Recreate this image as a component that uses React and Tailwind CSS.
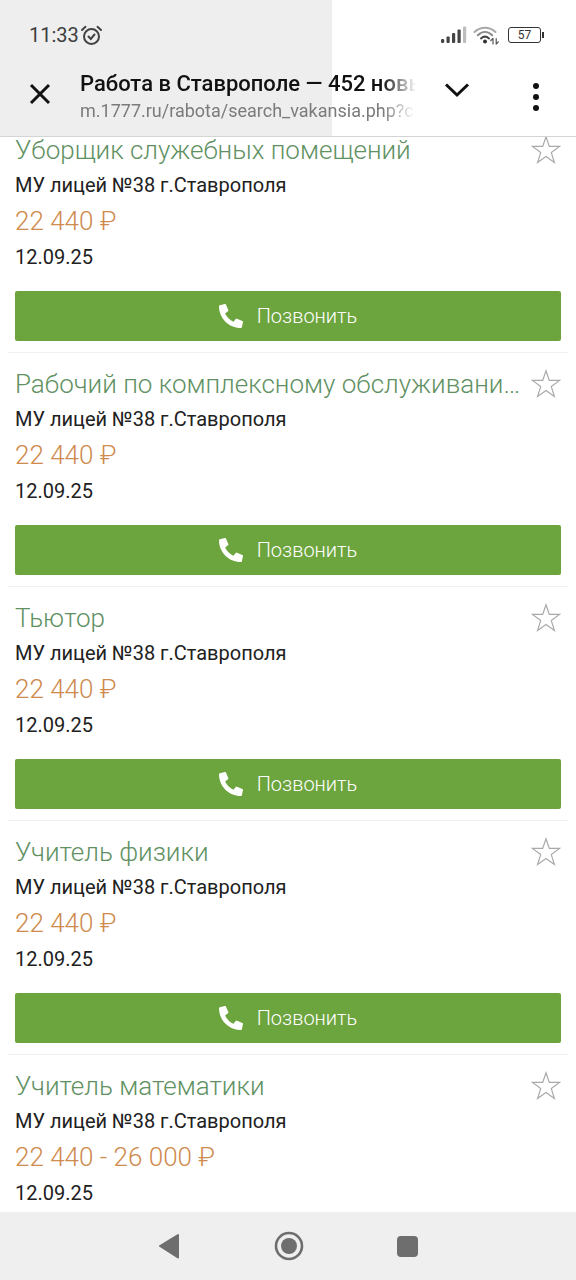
import React from "react";
import { FaPhoneAlt } from "react-icons/fa";

const jobs = [
  { title: "Уборщик служебных помещений", price: "22 440 ₽" },
  { title: "Рабочий по комплексному обслуживани…", price: "22 440 ₽" },
  { title: "Тьютор", price: "22 440 ₽" },
  { title: "Учитель физики", price: "22 440 ₽" },
  { title: "Учитель математики", price: "22 440 - 26 000 ₽" },
];

function Star() {
  return (
    <svg width="30" height="30" viewBox="0 0 30 30" fill="none" stroke="#a9a9a9" strokeWidth="1.2" strokeLinejoin="miter">
      <path d="M15 1.8 18.3 11.4 28.6 11.4 20.3 17.6 23.4 27.6 15 21.6 6.6 27.6 9.7 17.6 1.4 11.4 11.7 11.4Z" />
    </svg>
  );
}

function Card({ title, price }) {
  return (
    <div className="mx-2 h-[234px] shrink-0 border-b border-[#f1f1f1] px-[7px] pt-[14px]">
      <div className="flex h-[34px] items-center justify-between">
        <div className="min-w-0 truncate text-[26px] leading-[34px] font-light text-[#5f9163]">{title}</div>
        <div className="ml-2 shrink-0 pr-[-1px]"><Star /></div>
      </div>
      <div className="mt-[2px] text-[20px] leading-[32px] text-[#212121]">МУ лицей №38 г.Ставрополя</div>
      <div className="mt-[3px] text-[26px] leading-[34px] font-light text-[#cf8a4e]">{price}</div>
      <div className="mt-[2px] text-[20px] leading-[34px] text-[#212121]">12.09.25</div>
      <div className="mt-[17px] flex h-[50px] items-center justify-center gap-[14px] rounded-[2px] bg-[#6ca43e] text-[20px] text-white">
        <FaPhoneAlt className="h-[24px] w-[24px]" />
        <span className="font-light">Позвонить</span>
      </div>
    </div>
  );
}

function Alarm() {
  return (
    <svg width="23" height="23" viewBox="0 0 23 23" fill="none" stroke="#424242" strokeWidth="2" strokeLinecap="round">
      <circle cx="11.5" cy="12.5" r="7.5" />
      <path d="M8.5 12.5 10.8 15 14.5 10.5" />
      <path d="M2 6 5.5 2.8M21 6 17.5 2.8" />
    </svg>
  );
}

function Signal() {
  return (
    <svg width="26" height="18" viewBox="0 0 26 18">
      <rect x="0" y="13" width="3.2" height="4" rx="1.2" fill="#444" />
      <rect x="5.5" y="10.5" width="3.2" height="6.5" rx="1" fill="#444" />
      <rect x="11" y="7" width="3.2" height="10" rx="1" fill="#444" />
      <rect x="16.5" y="3.5" width="3.2" height="13.5" rx="1" fill="#444" />
      <rect x="22" y="0.5" width="3.2" height="16.5" rx="1" fill="#bdbdbd" />
    </svg>
  );
}

function Wifi() {
  return (
    <svg width="26" height="20" viewBox="0 0 26 20" fill="none" strokeLinecap="round">
      <path d="M1.5 7C7.5 1.2 16.5 1.2 22.5 7" stroke="#a8a8a8" strokeWidth="2" />
      <path d="M4.8 10.3C9.2 6 14.8 6 19.2 10.3" stroke="#8a8a8a" strokeWidth="2" />
      <path d="M8 13.4C10.5 11.2 13.5 11.2 16 13.4" stroke="#444" strokeWidth="2" />
      <circle cx="12" cy="16.6" r="2" fill="#333" />
      <path d="M20 13.5V19M17.8 15.5 20 13.5M23.2 13.5V19M23.2 19 25.2 17" stroke="#555" strokeWidth="1.2" />
    </svg>
  );
}

export default function App() {
  return (
    <div className="flex h-[1280px] w-[576px] flex-col overflow-hidden bg-white font-['Roboto',sans-serif]">
      <header className="relative z-10 h-[137px] shrink-0 border-b border-[#d4d4d4] bg-white">
        <div className="absolute inset-y-0 left-0 w-[332px] bg-[#eeeeee]" />
        <div className="relative flex h-[70px] items-start justify-between pt-[22px] pl-[29px] pr-[32px]">
          <div className="flex items-center gap-[1px] text-[20px] leading-[27px] text-[#3d3d3d]">
            <span>11:33</span>
            <Alarm />
          </div>
          <div className="flex items-center gap-[6px] pt-[3px]">
            <Signal />
            <Wifi />
            <div className="ml-[3px] flex items-center">
              <div className="flex h-[16px] w-[33px] items-center justify-center rounded-[3px] border border-[#333] text-[12px] leading-none text-[#333]">57</div>
              <div className="ml-[1px] h-[6px] w-[2px] bg-[#333]" />
            </div>
          </div>
        </div>
        <div className="relative flex h-[66px] items-start">
          <div className="flex w-[80px] justify-center pt-[12px]">
            <svg width="24" height="24" viewBox="0 0 24 24" fill="none" stroke="#111" strokeWidth="3">
              <path d="M3 3 21 21M21 3 3 21" />
            </svg>
          </div>
          <div className="w-[336px] overflow-hidden whitespace-nowrap [mask-image:linear-gradient(to_right,black_90%,transparent)]">
            <div className="text-[22px] leading-[27px] font-medium text-[#111]">Работа в Ставрополе — 452 новых вакансии</div>
            <div className="text-[18px] leading-[27px] text-[#7b7b7b]">m.1777.ru/rabota/search_vakansia.php?city=stavropol</div>
          </div>
          <div className="flex w-[82px] justify-center pt-[12px]">
            <svg width="26" height="16" viewBox="0 0 26 16" fill="none" stroke="#111" strokeWidth="3">
              <path d="M2 2.5 13 13 24 2.5" />
            </svg>
          </div>
          <div className="flex flex-1 flex-col items-center gap-[5px] pt-[13px] pr-[2px]">
            <span className="h-[6px] w-[6px] rounded-full bg-[#111]" />
            <span className="h-[6px] w-[6px] rounded-full bg-[#111]" />
            <span className="h-[6px] w-[6px] rounded-full bg-[#111]" />
          </div>
        </div>
      </header>
      <main className="min-h-0 flex-1 overflow-hidden">
        <div className="mt-[-18px] flex flex-col">
          {jobs.map((j) => (
            <Card key={j.title} title={j.title} price={j.price} />
          ))}
        </div>
      </main>
      <nav className="flex h-[68px] shrink-0 items-center justify-center bg-[#efefef] pt-[-1px]">
        <div className="flex w-[260px] items-center justify-between">
          <svg width="22" height="26" viewBox="0 0 22 26" fill="#6e6e6e">
            <path d="M20 2 2 13 20 24.5Z" stroke="#6e6e6e" strokeWidth="2" strokeLinejoin="round" />
          </svg>
          <svg width="30" height="30" viewBox="0 0 30 30">
            <circle cx="15" cy="15" r="13" fill="none" stroke="#6e6e6e" strokeWidth="2.6" />
            <circle cx="15" cy="15" r="8" fill="#6e6e6e" />
          </svg>
          <div className="h-[21px] w-[21px] rounded-[4px] bg-[#6e6e6e]" />
        </div>
      </nav>
    </div>
  );
}
